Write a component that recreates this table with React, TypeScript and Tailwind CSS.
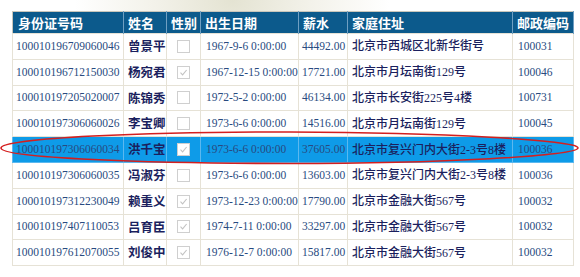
const rows = [
  ["100010196709060046", "曾景平", false, "1967-9-6 0:00:00", "44492.00", "北京市西城区北新华街号", "100031"],
  ["100010196712150030", "杨宛君", true, "1967-12-15 0:00:00", "17721.00", "北京市月坛南街129号", "100046"],
  ["100010197205020007", "陈锦秀", false, "1972-5-2 0:00:00", "46134.00", "北京市长安街225号4楼", "100731"],
  ["100010197306060026", "李宝卿", false, "1973-6-6 0:00:00", "14516.00", "北京市月坛南街129号", "100045"],
  ["100010197306060034", "洪千宝", true, "1973-6-6 0:00:00", "37605.00", "北京市复兴门内大街2-3号8楼", "100036"],
  ["100010197306060035", "冯淑芬", false, "1973-6-6 0:00:00", "13603.00", "北京市复兴门内大街2-3号8楼", "100036"],
  ["100010197312230049", "赖重义", true, "1973-12-23 0:00:00", "17790.00", "北京市金融大街567号", "100032"],
  ["100010197407110053", "吕育臣", true, "1974-7-11 0:00:00", "33297.00", "北京市金融大街567号", "100032"],
  ["100010197612070055", "刘俊中", true, "1976-12-7 0:00:00", "15817.00", "北京市金融大街567号", "100032"],
] as const;

const SELECTED = 4;

const num = "font-['Liberation_Serif',serif] text-[11.5px] text-[#284a80]";
const cjk = "font-['Liberation_Serif','Noto_Sans_CJK_SC',serif] text-[12px] text-[#1b1f5e]";

function Check({ on }: { on: boolean }) {
  return (
    <span className="mx-auto flex h-[13px] w-[13px] items-center justify-center border border-[#cfcfcf] bg-white">
      {on && (
        <svg width="9" height="9" viewBox="0 0 9 9">
          <path d="M1.5 4.6 L3.6 6.8 L7.6 2" fill="none" stroke="#c2c2c2" strokeWidth="1.1" />
        </svg>
      )}
    </span>
  );
}

export default function App() {
  const heads = ["身份证号码", "姓名", "性别", "出生日期", "薪水", "家庭住址", "邮政编码"];
  return (
    <div className="relative h-[277px] w-[580px] overflow-hidden bg-[radial-gradient(ellipse_at_40%_0%,#e4e3d2_0%,#f3f2ea_16%,#ffffff_32%),linear-gradient(to_bottom,#fff_88%,#ece5d2_100%)]">
      <div className="pl-[12px] pt-[11px]">
        <table className="w-[561px] table-fixed border-collapse border border-[#c9c6bb] bg-white">
          <colgroup>
            <col className="w-[111px]" />
            <col className="w-[43px]" />
            <col className="w-[34px]" />
            <col className="w-[98px]" />
            <col className="w-[49px]" />
            <col className="w-[165px]" />
            <col className="w-[61px]" />
          </colgroup>
          <thead>
            <tr className="h-[22px] bg-[#0c5a8c]">
              {heads.map((h, i) => (
                <th
                  key={h}
                  className={`border-r border-[#6f9fc2] text-left font-['Noto_Sans_CJK_SC',sans-serif] text-[13px] font-bold text-white ${
                    i === 0 ? "pl-[5px]" : "pl-[4px]"
                  }`}
                >
                  {h}
                </th>
              ))}
            </tr>
          </thead>
          <tbody>
            {rows.map((r, i) => {
              const sel = i === SELECTED;
              const bd = sel ? "border-[#5bb8ef]" : "border-[#e6e2d6]";
              return (
                <tr key={r[0]} className={`h-[25.8px] ${sel ? "bg-[#0e9be8]" : ""}`}>
                  <td className={`border ${bd} pl-[3px] ${num} whitespace-nowrap`}>{r[0]}</td>
                  <td className={`border ${bd} pl-[4px] font-['Noto_Sans_CJK_SC',sans-serif] text-[12.5px] font-semibold text-[#1b1f5e] whitespace-nowrap`}>
                    {r[1]}
                  </td>
                  <td className={`border ${bd}`}>
                    <Check on={r[2]} />
                  </td>
                  <td className={`border ${bd} pl-[5px] ${num} whitespace-nowrap`}>{r[3]}</td>
                  <td className={`border ${bd} pl-[3px] ${num} whitespace-nowrap`}>{r[4]}</td>
                  <td className={`border ${bd} pl-[4px] ${cjk} font-medium whitespace-nowrap`}>{r[5]}</td>
                  <td className={`border ${bd} pl-[5px] ${num} whitespace-nowrap`}>{r[6]}</td>
                </tr>
              );
            })}
          </tbody>
        </table>
      </div>
      <svg className="pointer-events-none absolute left-0 top-0" width="580" height="277">
        <path
          d="M1 148 C 1 138, 150 131.5, 290 132 C 440 132.5, 579 140, 578 148 C 577 156, 440 163.5, 290 163.5 C 150 163.5, 1 158, 1 148 Z"
          fill="none"
          stroke="#d41f1f"
          strokeWidth="1.6"
        />
      </svg>
    </div>
  );
}
